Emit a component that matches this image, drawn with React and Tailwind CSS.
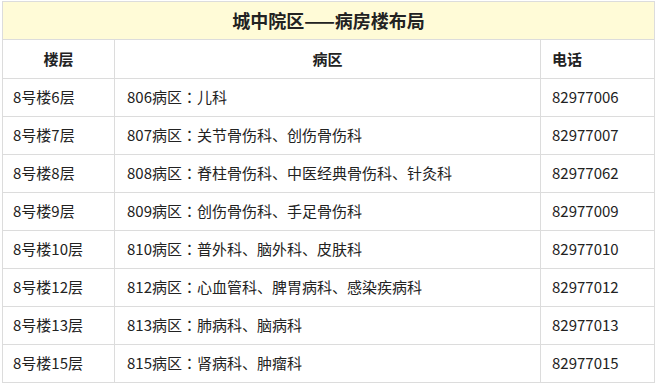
import React from 'react';

const rows = [
  ['8号楼6层', '806病区', '儿科', '82977006'],
  ['8号楼7层', '807病区', '关节骨伤科、创伤骨伤科', '82977007'],
  ['8号楼8层', '808病区', '脊柱骨伤科、中医经典骨伤科、针灸科', '82977062'],
  ['8号楼9层', '809病区', '创伤骨伤科、手足骨伤科', '82977009'],
  ['8号楼10层', '810病区', '普外科、脑外科、皮肤科', '82977010'],
  ['8号楼12层', '812病区', '心血管科、脾胃病科、感染疾病科', '82977012'],
  ['8号楼13层', '813病区', '肺病科、脑病科', '82977013'],
  ['8号楼15层', '815病区', '肾病科、肿瘤科', '82977015'],
];

export default function App() {
  return (
    <div className="w-[658px] h-[390px] bg-white pl-[2px] pt-[1px]" style={{ fontFamily: '"Noto Sans CJK SC", "Liberation Sans", sans-serif' }}>
      <table className="w-[652px] table-fixed border-collapse text-[15px] text-[#222]">
        <colgroup>
          <col className="w-[112px]" />
          <col className="w-[426px]" />
          <col className="w-[114px]" />
        </colgroup>
        <thead>
          <tr className="h-[38px]">
            <th colSpan={3} className="border border-[#dcdcdc] bg-[#fffbd7] text-[18px] font-bold text-center">
              城中院区——病房楼布局
            </th>
          </tr>
          <tr className="h-[39px]">
            <th className="border border-[#dcdcdc] font-bold text-center">楼层</th>
            <th className="border border-[#dcdcdc] font-bold text-center">病区</th>
            <th className="border border-[#dcdcdc] font-bold text-left pl-[11px]">电话</th>
          </tr>
        </thead>
        <tbody>
          {rows.map((r, i) => (
            <tr key={i} className="h-[38px]">
              <td className="border border-[#dcdcdc] pl-[10px]">{r[0]}</td>
              <td className="border border-[#dcdcdc] pl-[12px]">
                {r[1]}
                <span style={{ fontFamily: '"Noto Sans CJK JP", sans-serif' }}>：</span>
                {r[2]}
              </td>
              <td className="border border-[#dcdcdc] pl-[11px]">{r[3]}</td>
            </tr>
          ))}
        </tbody>
      </table>
    </div>
  );
}
